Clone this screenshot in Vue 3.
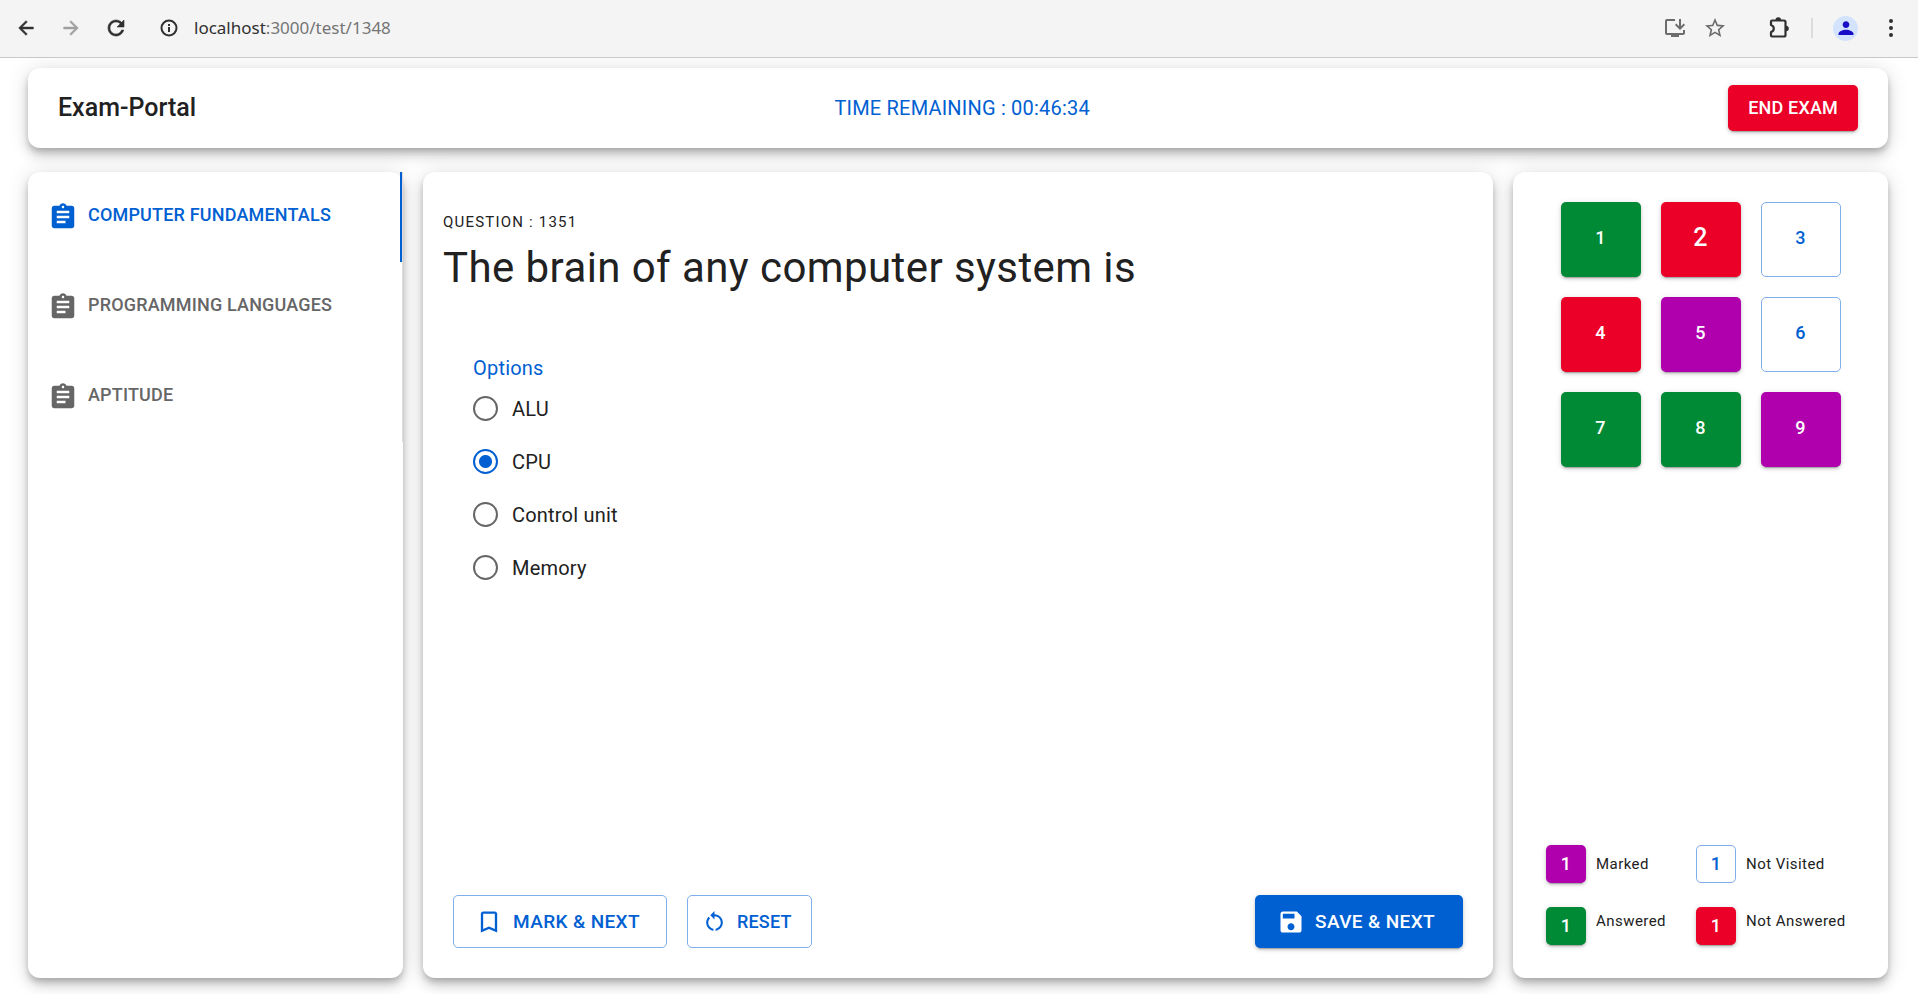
<script setup>
import { ref } from 'vue'

const sections = ['Computer Fundamentals', 'Programming Languages', 'Aptitude']
const activeSection = ref(0)

const options = ['ALU', 'CPU', 'Control unit', 'Memory']
const selected = ref('CPU')

const current = ref(2)
const questions = [
  { n: 1, state: 'answered' },
  { n: 2, state: 'missed' },
  { n: 3, state: 'unseen' },
  { n: 4, state: 'missed' },
  { n: 5, state: 'marked' },
  { n: 6, state: 'unseen' },
  { n: 7, state: 'answered' },
  { n: 8, state: 'answered' },
  { n: 9, state: 'marked' },
]

const legend = [
  { label: 'Marked', state: 'marked' },
  { label: 'Not Visited', state: 'unseen' },
  { label: 'Answered', state: 'answered' },
  { label: 'Not Answered', state: 'missed' },
]
</script>

<template>
  <div class="window">
    <div class="toolbar">
      <div class="nav">
        <button class="tool" aria-label="Back">
          <svg class="i22" viewBox="0 0 24 24"><path class="bold" d="M20 11H7.830l5.590-5.590L12 4l-8 8 8 8 1.410-1.410L7.830 13H20v-2z" /></svg>
        </button>
        <button class="tool faded" aria-label="Forward">
          <svg class="i22" viewBox="0 0 24 24"><path class="bold" d="M12 4l-1.410 1.410L16.170 11H4v2h12.170l-5.580 5.590L12 20l8-8z" /></svg>
        </button>
        <button class="tool" aria-label="Reload">
          <svg class="i24" viewBox="0 0 24 24"><path class="bold" d="M17.650 6.350C16.200 4.900 14.210 4 12 4c-4.420 0-7.990 3.580-7.990 8s3.570 8 7.990 8c3.730 0 6.840-2.550 7.730-6h-2.080c-.82 2.330-3.040 4-5.650 4-3.310 0-6-2.690-6-6s2.690-6 6-6c1.660 0 3.140.69 4.220 1.780L13 11h7V4l-2.350 2.350z" /></svg>
        </button>
      </div>
      <div class="address">
        <svg class="i18" viewBox="0 0 18 18">
          <circle cx="9" cy="9" r="7.500" fill="none" stroke="currentColor" stroke-width="2" />
          <path d="M8 8h2v5H8zM8 5h2v2H8z" />
        </svg>
        <span class="url"><b>localhost</b>:3000/test/1348</span>
      </div>
      <button class="tool small grey" aria-label="Install">
        <svg class="i24" viewBox="0 0 24 24"><path d="M20 17H4V5h8V3H4c-1.110 0-2 .89-2 2v12c0 1.100.89 2 2 2h4v2h8v-2h4c1.100 0 2-.9 2-2v-3h-2v3z" /><path d="M17 14l5-5-1.410-1.410L18 10.170V3h-2v7.170l-2.590-2.580L12 9z" /></svg>
      </button>
      <button class="tool small grey star" aria-label="Bookmark">
        <svg class="i24" viewBox="0 0 24 24"><path d="M22 9.240l-7.190-.62L12 2 9.190 8.630 2 9.240l5.460 4.730L5.820 21 12 17.270 18.180 21l-1.630-7.030L22 9.240zM12 15.400l-3.760 2.270 1-4.280-3.320-2.880 4.380-.38L12 6.100l1.710 4.040 4.380.38-3.320 2.880 1 4.280L12 15.400z" /></svg>
      </button>
      <button class="tool small puzzle" aria-label="Extensions">
        <svg class="i24" viewBox="0 0 24 24">
          <path d="M4 5.500Q4 4.500 5 4.500H17Q18.500 4.500 18.500 6V19Q18.500 20.500 17 20.500H5Q4 20.500 4 19.500V16Q6.800 15.200 6.800 12.500T4 9Z" fill="none" stroke="currentColor" stroke-width="2.200" stroke-linejoin="round" />
          <path d="M8.500 4a2.800 2.800 0 0 1 5.600 0zM19 9.700a2.800 2.800 0 0 1 0 5.600z" />
        </svg>
      </button>
      <span class="divider"></span>
      <button class="avatar" aria-label="Profile">
        <svg class="i20" viewBox="0 0 24 24"><path d="M12 12c2.210 0 4-1.790 4-4s-1.790-4-4-4-4 1.790-4 4 1.790 4 4 4zm0 2c-4 0-9 2-9 5v1.500h18V19c0-3-5-5-9-5z" /></svg>
      </button>
      <button class="tool" aria-label="Menu">
        <svg class="i24" viewBox="0 0 24 24"><circle cx="12" cy="5" r="2" /><circle cx="12" cy="12" r="2" /><circle cx="12" cy="19" r="2" /></svg>
      </button>
    </div>

    <div class="page">
      <header class="card header">
        <h1>Exam-Portal</h1>
        <p class="timer">TIME REMAINING : 00:46:34</p>
        <button class="btn missed end">END EXAM</button>
      </header>

      <main class="columns">
        <nav class="card">
          <div class="tabs" role="tablist">
            <button
              v-for="(s, i) in sections"
              :key="s"
              class="tab"
              :class="{ active: i === activeSection }"
              role="tab"
              :aria-selected="i === activeSection"
              @click="activeSection = i"
            >
              <svg class="i30" viewBox="0 0 24 24"><path d="M19 3h-4.180C14.400 1.840 13.300 1 12 1c-1.300 0-2.400.84-2.820 2H5c-1.100 0-2 .9-2 2v14c0 1.100.9 2 2 2h14c1.100 0 2-.9 2-2V5c0-1.100-.9-2-2-2zm-7 0c.55 0 1 .45 1 1s-.45 1-1 1-1-.45-1-1 .45-1 1-1zm2 14H7v-2h7v2zm3-4H7v-2h10v2zm0-4H7V7h10v2z" /></svg>
              <span>{{ s }}</span>
            </button>
          </div>
        </nav>

        <section class="card question">
          <p class="overline">QUESTION : 1351</p>
          <h2>The brain of any computer system is</h2>
          <fieldset>
            <legend>Options</legend>
            <label v-for="o in options" :key="o" class="option">
              <input v-model="selected" type="radio" name="answer" :value="o" />
              <span>{{ o }}</span>
            </label>
          </fieldset>
          <div class="actions">
            <button class="btn unseen large mark">
              <svg class="i28" viewBox="0 0 24 24"><path d="M17 3H7c-1.100 0-1.990.9-1.990 2L5 21l7-3 7 3V5c0-1.100-.9-2-2-2zm0 15l-5-2.180L7 18V5h10v13z" /></svg>
              <span>MARK &amp; NEXT</span>
            </button>
            <button class="btn unseen reset">
              <svg class="i25" viewBox="0 0 24 24"><path d="M12 5V2L8 6l4 4V7c3.310 0 6 2.690 6 6 0 2.970-2.170 5.430-5 5.910v2.020c3.950-.49 7-3.850 7-7.930 0-4.420-3.580-8-8-8zm-6 8c0-1.650.67-3.150 1.760-4.240L6.340 7.340C4.900 8.790 4 10.790 4 13c0 4.080 3.050 7.440 7 7.930v-2.020c-2.830-.48-5-2.940-5-5.910z" /></svg>
              <span>RESET</span>
            </button>
            <button class="btn primary large save">
              <svg class="i28" viewBox="0 0 24 24"><path d="M17 3H5c-1.110 0-2 .9-2 2v14c0 1.100.89 2 2 2h14c1.100 0 2-.9 2-2V7l-4-4zm-5 16c-1.660 0-3-1.340-3-3s1.340-3 3-3 3 1.340 3 3-1.340 3-3 3zm3-10H5V5h10v4z" /></svg>
              <span>SAVE &amp; NEXT</span>
            </button>
          </div>
        </section>

        <aside class="card palette">
          <div class="numbers">
            <button
              v-for="q in questions"
              :key="q.n"
              class="btn"
              :class="[q.state, { current: q.n === current }]"
              @click="current = q.n"
            >{{ q.n }}</button>
          </div>
          <ul class="legend">
            <li v-for="l in legend" :key="l.label">
              <button class="btn key" :class="l.state">1</button>
              <span>{{ l.label }}</span>
            </li>
          </ul>
        </aside>
      </main>
    </div>
  </div>
</template>

<style>
body {
  background: #fff;
}
</style>

<style scoped>
* {
  box-sizing: border-box;
}
.window {
  display: flex;
  flex-direction: column;
  min-height: 100vh;
  overflow: hidden;
  font-family: Roboto, "Liberation Sans", sans-serif;
  color: #212121;
}
h1, h2, p, ul, fieldset {
  margin: 0;
  padding: 0;
}
button {
  margin: 0;
  padding: 0;
  border: 0;
  background: none;
  font-family: inherit;
  cursor: pointer;
}
svg {
  display: block;
  flex: none;
  fill: currentColor;
}
.i18 { width: 18px; height: 18px; }
.i20 { width: 20px; height: 20px; }
.i22 { width: 22px; height: 22px; }
.i24 { width: 24px; height: 24px; }
.i25 { width: 25px; height: 25px; }
.i28 { width: 28px; height: 28px; }
.i30 { width: 30px; height: 30px; }
.bold {
  stroke: currentColor;
  stroke-width: 0.6;
}

/* Browser bar */
.toolbar {
  position: relative;
  z-index: 1;
  display: flex;
  align-items: center;
  height: 58px;
  padding: 0 11px 1px 9px;
  background: #f4f4f4;
  border-bottom: 1px solid #c8c8c8;
  color: #303030;
}
.nav {
  display: flex;
  gap: 12px;
}
.tool {
  display: flex;
  align-items: center;
  justify-content: center;
  width: 33px;
  height: 33px;
  color: inherit;
}
.small {
  width: 24px;
}
.faded {
  color: #a0a0a0;
}
.grey {
  color: #6c6c6c;
}
.star {
  margin: 0 40px 0 16px;
}
.address {
  flex: 1;
  display: flex;
  align-items: center;
  gap: 16px;
  margin-left: 28px;
}
.url {
  font: 17px/24px "Noto Sans", sans-serif;
  color: #757575;
}
.url b {
  font-weight: 400;
  color: #303030;
}
.divider {
  width: 2px;
  height: 20px;
  margin: 0 20px;
  background: #dcdcdc;
}
.avatar {
  display: flex;
  align-items: center;
  justify-content: center;
  width: 25px;
  height: 25px;
  margin-right: 16px;
  border-radius: 50%;
  background: #d3e3fd;
  color: #1a0dc8;
}

/* Page frame */
.page {
  flex: 1;
  display: flex;
  flex-direction: column;
  gap: 24px;
  padding: 10px 30px 16px 28px;
}
.card {
  background: #fff;
  border-radius: 12px;
  box-shadow:
    0 4px 6px -1px rgba(0, 0, 0, 0.2),
    0 8px 12px rgba(0, 0, 0, 0.14),
    0 1px 22px rgba(0, 0, 0, 0.12);
}
.header {
  display: flex;
  align-items: center;
  justify-content: space-between;
  min-height: 80px;
  padding: 0 30px;
}
h1 {
  font-size: 25px;
  line-height: 40px;
  font-weight: 500;
}
.timer {
  font-size: 20px;
  line-height: 30px;
  letter-spacing: 0.01em;
  color: #0060d2;
}
.columns {
  flex: 1;
  display: grid;
  grid-template-columns: 375px 1fr 375px;
  gap: 20px;
}

/* Buttons */
.btn {
  display: flex;
  align-items: center;
  justify-content: center;
  border-radius: 5px;
  font-size: 18px;
  line-height: 30px;
  font-weight: 500;
  letter-spacing: 0.01em;
  color: #fff;
  box-shadow:
    0 4px 1px -3px rgba(0, 0, 0, 0.2),
    0 2px 3px rgba(0, 0, 0, 0.14),
    0 1px 6px rgba(0, 0, 0, 0.12);
}
.marked { background: #b000ae; }
.answered { background: #008a35; }
.missed { background: #eb0028; }
.primary { background: #0060d2; }
.unseen {
  border: 1px solid #80aeea;
  color: #0060d2;
  box-shadow: none;
}
.end {
  padding: 8px 20px;
}

/* Section tabs */
.tabs {
  border-right: 1px solid #dcdcdc;
}
.tab {
  display: flex;
  align-items: center;
  gap: 10px;
  width: 100%;
  height: 90px;
  padding: 0 18px 0 20px;
  border-right: 2px solid transparent;
  font-size: 18px;
  line-height: 22px;
  font-weight: 500;
  letter-spacing: 0.01em;
  text-transform: uppercase;
  color: #666;
}
.tab.active {
  border-color: #0060d2;
  color: #0060d2;
}
.tab span {
  padding-bottom: 4px;
}

/* Question */
.question {
  display: flex;
  flex-direction: column;
  padding: 30px;
}
.overline {
  margin-left: -10px;
  font-size: 15px;
  line-height: 40px;
  letter-spacing: 0.08em;
}
h2 {
  margin-left: -10px;
  font-size: 42px;
  line-height: 52px;
  font-weight: 400;
  letter-spacing: 0.01em;
}
fieldset {
  min-width: 0;
  margin: 60px 20px 0;
  border: 0;
}
legend {
  padding: 0;
  font-size: 20px;
  line-height: 28px;
  letter-spacing: 0.01em;
  color: #0060d2;
}
.option {
  display: flex;
  align-items: center;
  gap: 14px;
  height: 53px;
  font-size: 20px;
  line-height: 30px;
  letter-spacing: 0.01em;
}
.option input {
  appearance: none;
  width: 25px;
  height: 25px;
  margin: 0;
  border: 2px solid #666;
  border-radius: 50%;
}
.option input:checked {
  border-color: #0060d2;
  background: radial-gradient(circle, #0060d2 6px, transparent 7px);
}
.actions {
  display: flex;
  gap: 20px;
  margin-top: auto;
}
.actions .btn {
  gap: 10px;
  height: 53px;
}
.actions .large {
  font-size: 19px;
  letter-spacing: 0.02em;
}
.actions .mark {
  padding: 0 26px 0 21px;
}
.actions .reset {
  padding: 0 19px 0 14px;
}
.actions .save {
  margin-left: auto;
  padding: 0 28px 0 22px;
}

/* Question palette */
.palette {
  display: flex;
  flex-direction: column;
  justify-content: space-between;
  padding: 30px 33px 33px;
}
.numbers {
  display: grid;
  grid-template-columns: repeat(3, 80px);
  grid-auto-rows: 75px;
  justify-content: center;
  gap: 20px;
}
.numbers .btn {
  padding-bottom: 4px;
}
.numbers .current {
  font-size: 25px;
}
.legend {
  display: grid;
  grid-template-columns: repeat(2, 150px);
  row-gap: 24px;
  list-style: none;
  font-size: 15px;
  line-height: 28px;
  letter-spacing: 0.03em;
  white-space: nowrap;
}
.legend li {
  display: flex;
  align-items: center;
  gap: 10px;
}
.legend li:nth-child(n + 3) {
  align-items: flex-start;
}
.key {
  width: 40px;
  height: 38px;
}
</style>
